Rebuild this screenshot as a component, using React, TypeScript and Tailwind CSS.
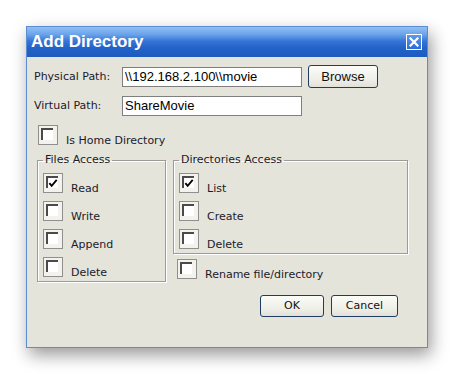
import React from "react";

const label = "font-['DejaVu_Sans',sans-serif] text-[11px] leading-[14px] text-[#1c1a2a]";

function Check({ checked = false }: { checked?: boolean }) {
  return (
    <div className="w-[20px] h-[20px] shrink-0 border border-[#8f8f8f] bg-[#f3f2ec] p-[2px] pr-[4px] pb-[4px]">
      <div className="relative w-full h-full border-t-2 border-l-2 border-t-[#4a4a4a] border-l-[#4a4a4a] bg-white">
        {checked && (
          <svg viewBox="0 0 12 12" className="absolute left-0 top-0 w-[11px] h-[11px]">
            <path d="M1.5 5.5 L4 8.5 L9.5 2" fill="none" stroke="#000" strokeWidth="2" />
          </svg>
        )}
      </div>
    </div>
  );
}

function CheckRow({ text, checked = false }: { text: string; checked?: boolean }) {
  return (
    <div className="flex items-start h-[20px]">
      <Check checked={checked} />
      <span className={`${label} ml-[8px] mt-[9px] whitespace-nowrap`}>{text}</span>
    </div>
  );
}

function Btn({ children, w, h = "h-[23px]", font }: { children: React.ReactNode; w: string; h?: string; font: string }) {
  return (
    <div
      className={`${w} ${h} flex items-center justify-center rounded-[3px] border border-[#1f3d63] bg-[linear-gradient(to_bottom,#fbfbf8_0%,#f0f0ea_60%,#e2e1d8_100%)] text-[#111] ${font}`}
    >
      {children}
    </div>
  );
}

export default function App() {
  return (
    <div className="w-[454px] h-[374px] bg-white pl-[26px] pt-[26px]">
      <div className="w-[402px] h-[322px] flex flex-col border border-[#5b8dd3] bg-[#e5e4da] shadow-[3px_7px_16px_rgba(0,0,0,0.4)]">
        {/* title bar */}
        <div className="h-[30px] shrink-0 flex items-center justify-between pl-[4px] pr-[5px] bg-[linear-gradient(to_bottom,#93c0f5_0%,#6aa3ea_25%,#3573d6_48%,#2362c8_70%,#1d5bbf_100%)]">
          <span className="font-['Liberation_Sans',sans-serif] font-bold text-[17px] leading-[20px] text-white">
            Add Directory
          </span>
          <div className="w-[16px] h-[16px] border border-white bg-[linear-gradient(to_bottom,#5b98ee,#2d6bd9)] flex items-center justify-center">
            <svg viewBox="0 0 10 10" className="w-[10px] h-[10px]">
              <path d="M1.5 1.5 L8.5 8.5 M8.5 1.5 L1.5 8.5" stroke="#fff" strokeWidth="2.2" strokeLinecap="square" />
            </svg>
          </div>
        </div>

        {/* body */}
        <div className="flex flex-col pl-[7px] pt-[8px]">
          <div className="flex items-center h-[23px]">
            <span className={`${label} w-[88px]`}>Physical Path:</span>
            <div className="w-[180px] h-[20px] border border-[#7f7f7f] bg-white flex items-center pl-[2px] font-['Liberation_Sans',sans-serif] text-[13px] text-black">
              \\192.168.2.100\\movie
            </div>
            <div className="ml-[6px]">
              <Btn w="w-[70px]" font="font-['Liberation_Sans',sans-serif] text-[13px]">Browse</Btn>
            </div>
          </div>
          <div className="flex items-center h-[20px] mt-[8px]">
            <span className={`${label} w-[88px]`}>Virtual Path:</span>
            <div className="w-[180px] h-[20px] border border-[#7f7f7f] bg-white flex items-center pl-[2px] font-['Liberation_Sans',sans-serif] text-[13px] text-black">
              ShareMovie
            </div>
          </div>

          <div className="ml-[4px] mt-[9px]">
            <CheckRow text="Is Home Directory" />
          </div>

          <div className="flex items-start mt-[8px] ml-[3px]">
            <fieldset className="w-[129px] border border-[#9b9b9b] pl-[5px] pb-[4px] shadow-[inset_1px_1px_0_#fff,1px_1px_0_#fff]">
              <legend className={`${label} px-[2px]`}>Files Access</legend>
              <div className="flex flex-col gap-[8px] mt-[6px]">
                <CheckRow text="Read" checked />
                <CheckRow text="Write" />
                <CheckRow text="Append" />
                <CheckRow text="Delete" />
              </div>
            </fieldset>
            <div className="flex flex-col ml-[7px]">
              <fieldset className="w-[235px] border border-[#9b9b9b] pl-[5px] pb-[4px] shadow-[inset_1px_1px_0_#fff,1px_1px_0_#fff]">
                <legend className={`${label} px-[2px]`}>Directories Access</legend>
                <div className="flex flex-col gap-[8px] mt-[6px]">
                  <CheckRow text="List" checked />
                  <CheckRow text="Create" />
                  <CheckRow text="Delete" />
                </div>
              </fieldset>
              <div className="ml-[4px] mt-[5px]">
                <CheckRow text="Rename file/directory" />
              </div>
            </div>
          </div>

          <div className="flex justify-end gap-[7px] mt-[13px] pr-[29px]">
            <Btn w="w-[64px]" h="h-[22px]" font="font-['DejaVu_Sans',sans-serif] text-[11px]">OK</Btn>
            <Btn w="w-[67px]" h="h-[22px]" font="font-['DejaVu_Sans',sans-serif] text-[11px]">Cancel</Btn>
          </div>
        </div>
      </div>
    </div>
  );
}
